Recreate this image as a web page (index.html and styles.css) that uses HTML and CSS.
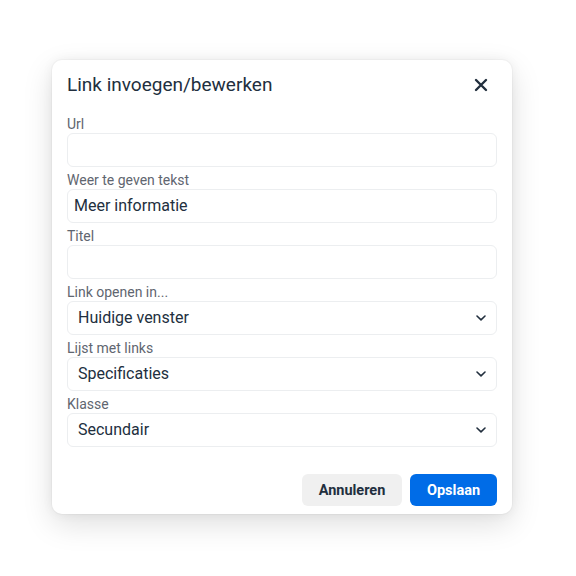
FILE: index.html
```html
<!DOCTYPE html>
<html lang="nl">
<head>
<meta charset="utf-8">
<title>Link invoegen/bewerken</title>
<link rel="stylesheet" href="styles.css">
</head>
<body>
<div class="dialog">
  <div class="dialog-header">
    <div class="dialog-title">Link invoegen/bewerken</div>
    <button class="close" aria-label="Sluiten">
      <svg width="14" height="14" viewBox="0 0 14 14"><path d="M2 2L12 12M12 2L2 12" stroke="#222f3e" stroke-width="2.4" stroke-linecap="round"/></svg>
    </button>
  </div>
  <div class="dialog-body">
    <div class="field">
      <label class="label">Url</label>
      <div class="input"></div>
    </div>
    <div class="field">
      <label class="label">Weer te geven tekst</label>
      <div class="input">Meer informatie</div>
    </div>
    <div class="field">
      <label class="label">Titel</label>
      <div class="input"></div>
    </div>
    <div class="field">
      <label class="label">Link openen in...</label>
      <div class="input select"><span>Huidige venster</span><svg class="chev" width="12" height="8" viewBox="0 0 12 8"><path d="M2 2L6 5.8L10 2" fill="none" stroke="#222f3e" stroke-width="1.6" stroke-linecap="round" stroke-linejoin="round"/></svg></div>
    </div>
    <div class="field">
      <label class="label">Lijst met links</label>
      <div class="input select"><span>Specificaties</span><svg class="chev" width="12" height="8" viewBox="0 0 12 8"><path d="M2 2L6 5.8L10 2" fill="none" stroke="#222f3e" stroke-width="1.6" stroke-linecap="round" stroke-linejoin="round"/></svg></div>
    </div>
    <div class="field">
      <label class="label">Klasse</label>
      <div class="input select"><span>Secundair</span><svg class="chev" width="12" height="8" viewBox="0 0 12 8"><path d="M2 2L6 5.8L10 2" fill="none" stroke="#222f3e" stroke-width="1.6" stroke-linecap="round" stroke-linejoin="round"/></svg></div>
    </div>
  </div>
  <div class="dialog-footer">
    <button class="btn btn-secondary">Annuleren</button>
    <button class="btn btn-primary">Opslaan</button>
  </div>
</div>
</body>
</html>
```
FILE: styles.css
```css
* { box-sizing: border-box; }
html, body { margin: 0; padding: 0; background: #ffffff; }
html { min-height: 100%; }
body {
  font-family: Roboto, "Liberation Sans", sans-serif;
  color: #222f3e;
  padding: 60px 0 0 52px;
  min-height: 576px;
}
.dialog {
  width: 460px;
  height: 454px;
  background: #fff;
  border-radius: 10px;
  box-shadow: 0 0 0 1px rgba(0,0,0,0.025), 0 10px 30px rgba(0,0,0,0.13), 0 0 12px rgba(0,0,0,0.05);
  display: flex;
  flex-direction: column;
}
.dialog-header {
  display: flex;
  justify-content: space-between;
  align-items: center;
  padding: 13px 15px 0 15px;
}
.dialog-title {
  font-size: 19px;
  line-height: 24px;
  font-weight: 400;
  color: #222f3e;
}
.close {
  width: 24px;
  height: 24px;
  border: 0;
  background: none;
  padding: 0;
  margin-right: 4px;
  display: flex;
  align-items: center;
  justify-content: center;
}
.dialog-body {
  padding: 19px 15px 0 15px;
  display: flex;
  flex-direction: column;
  gap: 5px;
}
.field { display: flex; flex-direction: column; }
.label {
  font-size: 14px;
  line-height: 17px;
  color: #5f6670;
}
.input {
  height: 34px;
  border: 1px solid #eceef0;
  border-radius: 6px;
  padding: 0 6px;
  font-size: 16px;
  line-height: 32px;
  color: #222f3e;
  display: flex;
  align-items: center;
}
.select {
  justify-content: space-between;
  padding: 0 9px 0 10px;
}
.chev { display: block; }
.dialog-footer {
  margin-top: auto;
  display: flex;
  justify-content: flex-end;
  gap: 8px;
  padding: 0 15px 8px 15px;
}
.btn {
  height: 32px;
  border: 0;
  border-radius: 6px;
  font-family: inherit;
  font-size: 14.5px;
  font-weight: 700;
  padding: 0 16px;
}
.btn-secondary {
  width: 100px;
  background: #f0f0f0;
  color: #222f3e;
}
.btn-primary {
  width: 87px;
  background: #006ce7;
  color: #fff;
}
```
